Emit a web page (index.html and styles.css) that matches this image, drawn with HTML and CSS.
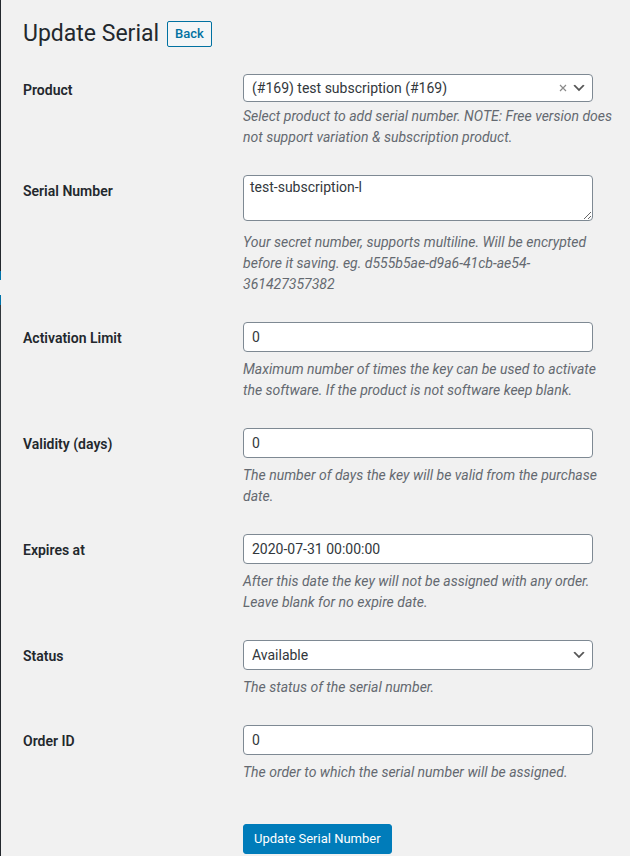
FILE: index.html
```html
<!DOCTYPE html>
<html lang="en">
<head>
<meta charset="utf-8">
<title>Update Serial</title>
<link rel="stylesheet" href="styles.css">
</head>
<body>
<div class="layout">
  <div class="strip">
    <span class="seg seg-top"></span>
    <span class="seg seg-blue"></span>
    <span class="seg seg-gap"></span>
    <span class="seg seg-blue seg-blue2"></span>
    <span class="seg seg-mid"></span>
    <span class="seg seg-bottom"></span>
  </div>
  <div class="wrap">
    <div class="heading">
      <h1 class="title">Update Serial</h1>
      <a class="back" href="#">Back</a>
    </div>
    <form class="form">
      <div class="row">
        <label class="label">Product</label>
        <div class="field">
          <div class="select select-product">
            <span class="select-text">(#169) test subscription (#169)</span>
            <svg class="clear" width="8" height="8" viewBox="0 0 8 8"><path d="M1 1L7 7M7 1L1 7" stroke="#8a8a8a" stroke-width="1.2"/></svg>
            <svg class="chev" width="16" height="16" viewBox="0 0 20 20"><path d="M5 6l5 5 5-5 2 1-7 7-7-7 2-1z" fill="#555"/></svg>
          </div>
          <p class="desc desc-tight">Select product to add serial number. NOTE: Free version does not support variation &amp; subscription product.</p>
        </div>
      </div>
      <div class="row">
        <label class="label">Serial Number</label>
        <div class="field">
          <textarea class="textarea">test-subscription-l</textarea>
          <p class="desc">Your secret number, supports multiline. Will be encrypted before it saving. eg. d555b5ae-d9a6-41cb-ae54-361427357382</p>
        </div>
      </div>
      <div class="row">
        <label class="label">Activation Limit</label>
        <div class="field">
          <input class="input" type="text" value="0">
          <p class="desc">Maximum number of times the key can be used to activate the software. If the product is not software keep blank.</p>
        </div>
      </div>
      <div class="row">
        <label class="label">Validity (days)</label>
        <div class="field">
          <input class="input" type="text" value="0">
          <p class="desc">The number of days the key will be valid from the purchase date.</p>
        </div>
      </div>
      <div class="row">
        <label class="label">Expires at</label>
        <div class="field">
          <input class="input" type="text" value="2020-07-31 00:00:00">
          <p class="desc">After this date the key will not be assigned with any order. Leave blank for no expire date.</p>
        </div>
      </div>
      <div class="row">
        <label class="label">Status</label>
        <div class="field">
          <div class="select select-status">
            <span class="select-text">Available</span>
            <svg class="chev" width="16" height="16" viewBox="0 0 20 20"><path d="M5 6l5 5 5-5 2 1-7 7-7-7 2-1z" fill="#555"/></svg>
          </div>
          <p class="desc">The status of the serial number.</p>
        </div>
      </div>
      <div class="row">
        <label class="label">Order ID</label>
        <div class="field">
          <input class="input" type="text" value="0">
          <p class="desc">The order to which the serial number will be assigned.</p>
        </div>
      </div>
      <div class="submit">
        <button class="button" type="button">Update Serial Number</button>
      </div>
    </form>
  </div>
</div>
</body>
</html>
```
FILE: styles.css
```css
* { box-sizing: border-box; }
html, body { margin: 0; padding: 0; }
body {
  background: #f1f1f1;
  font-family: Roboto, "Segoe UI", "Noto Sans", sans-serif;
  font-size: 14px;
  color: #3c434a;
}
.layout { display: flex; min-height: 856px; }
.strip { width: 1px; flex-shrink: 0; display: flex; flex-direction: column; }
.seg { display: block; }
.seg-top { height: 271px; background: #23282d; }
.seg-blue { height: 9px; background: #0073aa; }
.seg-gap { height: 15px; }
.seg-blue2 { height: 10px; }
.seg-mid { height: 215px; background: #32373c; }
.seg-bottom { flex: 1; background: #23282d; }

.wrap { flex: 1; padding: 10px 0 0 22px; }
.heading { display: flex; align-items: center; gap: 8px; padding: 9px 0 4px; }
.title { margin: 0; font-size: 23px; font-weight: 400; line-height: 29.9px; color: #23282d; }
.back {
  display: inline-block;
  font-size: 13px;
  font-weight: 500;
  line-height: 16px;
  padding: 4px 7px;
  color: #0071a1;
  background: #f3f5f6;
  border: 1px solid #0071a1;
  border-radius: 2px;
  text-decoration: none;
}
.form { margin-top: 6px; }
.row { display: flex; }
.label {
  width: 220px;
  flex-shrink: 0;
  padding-top: 22px;
  font-weight: 600;
  line-height: 18.2px;
  color: #23282d;
}
.field { width: 374px; padding: 15px 0 12px; }
.select {
  width: 350px;
  height: 28px;
  display: flex;
  align-items: center;
  background: #fff;
  border: 1px solid #7e8993;
  border-radius: 4px;
  padding: 0 5px 0 8px;
  color: #32373c;
}
.select-text { flex: 1; white-space: nowrap; overflow: hidden; }
.select-status { height: 30px; }
.clear { margin-right: 4px; }
.chev { display: block; }
.input {
  display: block;
  width: 350px;
  height: 30px;
  margin: 0;
  padding: 0 8px;
  font: inherit;
  color: #32373c;
  background: #fff;
  border: 1px solid #7e8993;
  border-radius: 4px;
}
.textarea {
  display: block;
  width: 350px;
  height: 46px;
  margin: 0 0 8px;
  padding: 2px 6px;
  font: inherit;
  line-height: 1.42857;
  color: #32373c;
  background: #fff;
  border: 1px solid #7e8993;
  border-radius: 4px;
}
.desc {
  margin: 4px 0 0;
  padding-top: 3px;
  font-style: italic;
  line-height: 21px;
  color: #646970;
}
.desc-tight { margin-top: 1px; }
.submit { padding: 29px 0 0 220px; }
.button {
  height: 30px;
  padding: 0 10px;
  font-family: inherit;
  font-size: 13px;
  color: #fff;
  background: #007cba;
  border: 1px solid #007cba;
  border-radius: 3px;
}
```
